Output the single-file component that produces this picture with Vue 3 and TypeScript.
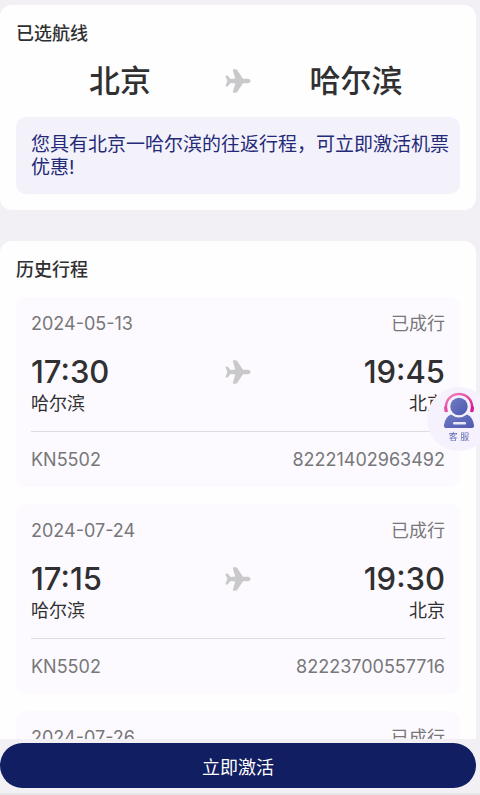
<script setup lang="ts">
import { h } from 'vue'

interface Trip {
  date: string
  status: string
  depart: string
  arrive: string
  from: string
  to: string
  flight: string
  ticket: string
}

const trips: Trip[] = [
  { date: '2024-05-13', status: '已成行', depart: '17:30', arrive: '19:45', from: '哈尔滨', to: '北京', flight: 'KN5502', ticket: '82221402963492' },
  { date: '2024-07-24', status: '已成行', depart: '17:15', arrive: '19:30', from: '哈尔滨', to: '北京', flight: 'KN5502', ticket: '82223700557716' },
  { date: '2024-07-26', status: '已成行', depart: '', arrive: '', from: '', to: '', flight: '', ticket: '' },
]

const PlaneIcon = () =>
  h('svg', { width: 28, height: 28, viewBox: '0 0 28 28', 'aria-hidden': 'true' }, [
    h('path', {
      fill: '#c9c9cb',
      d: 'M24 11.7H19L13.2 3.1Q12.6 2.3 11.7 2.3H9.8Q8.5 2.3 8.9 3.5L11.3 11.6L6.6 11.9L4.1 9Q3.6 8.5 3 8.5H2.2Q1.3 8.5 1.6 9.4L3.4 14L1.6 18.600Q1.3 19.500 2.2 19.500H3Q3.6 19.500 4.1 19L6.6 16.100L11.3 16.400L8.9 24.500Q8.5 25.700 9.8 25.700H11.7Q12.6 25.700 13.2 24.900L19 16.300H24Q26.6 16 26.6 14Q26.6 12 24 11.7Z',
    }),
  ])
</script>

<template>
  <div class="page">
    <main class="content">
      <section class="card">
        <h2 class="title">已选航线</h2>
        <div class="route">
          <span>北京</span>
          <PlaneIcon />
          <span>哈尔滨</span>
        </div>
        <p class="notice">您具有北京一哈尔滨的往返行程，可立即激活机票优惠!</p>
      </section>

      <section class="card">
        <h2 class="title">历史行程</h2>
        <div class="trips">
          <article v-for="trip in trips" :key="trip.date" class="trip">
            <div class="row">
              <time>{{ trip.date }}</time>
              <span>{{ trip.status }}</span>
            </div>
            <template v-if="trip.flight">
              <div class="legs">
                <div>
                  <div class="clock">{{ trip.depart }}</div>
                  <div class="city">{{ trip.from }}</div>
                </div>
                <div class="plane"><PlaneIcon /></div>
                <div class="end">
                  <div class="clock">{{ trip.arrive }}</div>
                  <div class="city">{{ trip.to }}</div>
                </div>
              </div>
              <div class="row footer-row">
                <span>{{ trip.flight }}</span>
                <span>{{ trip.ticket }}</span>
              </div>
            </template>
          </article>
        </div>
      </section>
    </main>

    <footer class="bar">
      <button type="button" class="activate">立即激活</button>
    </footer>

    <button type="button" class="service">
      <svg width="34" height="38" viewBox="0 0 34 38" aria-hidden="true">
        <defs>
          <linearGradient id="band" x1="0" y1="0" x2="1" y2="1">
            <stop offset="0" stop-color="#f086bd" />
            <stop offset="1" stop-color="#d81b8c" />
          </linearGradient>
          <linearGradient id="body" x1="0" y1="0" x2="1" y2="1">
            <stop offset="0" stop-color="#6f7bc4" />
            <stop offset="1" stop-color="#5059b0" />
          </linearGradient>
        </defs>
        <path d="M4 18V15.500A13 12.500 0 0 1 30 15.500V18" fill="none" stroke="url(#band)" stroke-width="2.400" />
        <path d="M2 17Q2 14.500 4.500 14.500L6 20.500Q4 22 2.500 20.500Z" fill="#e84fa5" />
        <path d="M32 17Q32 14.500 29.500 14.500L28 20.500Q30 22 31.500 20.500Z" fill="#d81b8c" />
        <path d="M9 23.500Q17 29.500 25 23.500Q31 26 32 34Q32.300 37 30 37H4Q1.700 37 2 34Q3 26 9 23.500Z" fill="url(#body)" />
        <circle cx="17" cy="15.500" r="8.700" fill="url(#body)" />
        <rect x="11" y="31" width="13" height="2.500" rx="1" fill="#e9e8fa" />
      </svg>
      <span>客 服</span>
    </button>
  </div>
</template>

<style>
body {
  margin: 0;
  background: #f2f0f4;
}
</style>

<style scoped>
.page {
  display: flex;
  flex-direction: column;
  height: 100vh;
  overflow: hidden;
  background: #f2f0f4;
  color: #303032;
  font-family: Inter, "Noto Sans CJK SC", sans-serif;
  font-size: 18px;
  line-height: 24px;
}

.content {
  flex: 1;
  min-height: 0;
  overflow-y: auto;
  scrollbar-width: none;
  padding: 5px 4px 0 0;
}

.card {
  padding: 17px 16px 16px;
  border-radius: 12px;
  background: #fefefe;
}

.card + .card {
  margin-top: 31px;
}

.title {
  margin: 0;
  font-size: 18px;
  font-weight: 500;
  line-height: 24px;
}

.route {
  display: grid;
  grid-template-columns: 1fr auto 1fr;
  align-items: center;
  margin: 11px 0 12px;
  font-size: 31px;
  font-weight: 500;
  line-height: 48px;
  text-align: center;
}

.route svg,
.plane svg {
  display: block;
}

.notice {
  margin: 0;
  padding: 16px 10px 15px 15px;
  border-radius: 10px;
  background: #f3f2fa;
  color: #252a78;
  font-size: 19px;
  line-height: 23px;
}

.trips {
  display: flex;
  flex-direction: column;
  gap: 17px;
  margin-top: 15px;
}

.trip {
  padding: 15px;
  border-radius: 10px;
  background: #fcfafe;
}

.row {
  display: flex;
  justify-content: space-between;
  color: #77777a;
}

.legs {
  display: grid;
  grid-template-columns: 1fr auto 1fr;
  padding: 16px 0 15px;
  border-bottom: 1px solid #dddde1;
}

.clock {
  font-size: 31px;
  font-weight: 500;
  line-height: 40px;
}

.plane {
  padding-top: 6px;
}

.end {
  text-align: right;
}

.footer-row {
  padding-top: 16px;
}

.bar {
  padding: 4px 4px 5px 0;
  border-bottom: 2px solid #e6e6e9;
}

.activate {
  display: block;
  width: 100%;
  height: 45px;
  border: 0;
  border-radius: 23px;
  background: #111e62;
  color: #fff;
  font-family: inherit;
  font-size: 18px;
  cursor: pointer;
}

.service {
  position: fixed;
  top: 387px;
  right: -11px;
  display: flex;
  flex-direction: column;
  align-items: center;
  width: 64px;
  height: 64px;
  padding: 4px 0 0;
  border: 0;
  border-radius: 50%;
  background: #f5f2fd;
  color: #6069b5;
  font-family: inherit;
  font-size: 9px;
  line-height: 16px;
  cursor: pointer;
}
</style>
